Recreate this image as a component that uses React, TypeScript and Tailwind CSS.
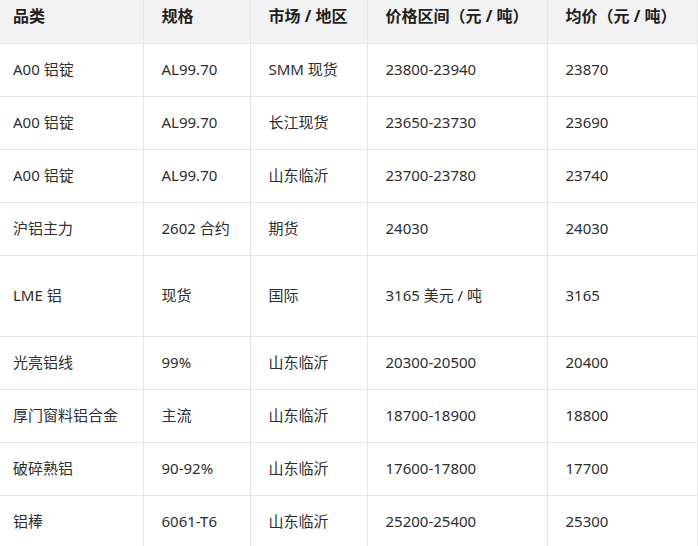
import React from "react";

type Row = { name: string; spec: string; market: string; range: string; avg: string; tall?: boolean };

const rows: Row[] = [
  { name: "A00 铝锭", spec: "AL99.70", market: "SMM 现货", range: "23800-23940", avg: "23870" },
  { name: "A00 铝锭", spec: "AL99.70", market: "长江现货", range: "23650-23730", avg: "23690" },
  { name: "A00 铝锭", spec: "AL99.70", market: "山东临沂", range: "23700-23780", avg: "23740" },
  { name: "沪铝主力", spec: "2602 合约", market: "期货", range: "24030", avg: "24030" },
  { name: "LME 铝", spec: "现货", market: "国际", range: "3165 美元 / 吨", avg: "3165", tall: true },
  { name: "光亮铝线", spec: "99%", market: "山东临沂", range: "20300-20500", avg: "20400" },
  { name: "厚门窗料铝合金", spec: "主流", market: "山东临沂", range: "18700-18900", avg: "18800" },
  { name: "破碎熟铝", spec: "90-92%", market: "山东临沂", range: "17600-17800", avg: "17700" },
  { name: "铝棒", spec: "6061-T6", market: "山东临沂", range: "25200-25400", avg: "25300" },
];

const headers = ["品类", "规格", "市场 / 地区", "价格区间（元 / 吨）", "均价（元 / 吨）"];

export default function App() {
  return (
    <div
      className="w-[698px] h-[546px] overflow-hidden bg-white text-[15px] text-[#2e2e2e]"
      style={{ fontFamily: '"Noto Sans", "Noto Sans CJK SC", sans-serif' }}
    >
      <table className="table-fixed border-collapse w-[697px]">
        <colgroup>
          <col className="w-[143px]" />
          <col className="w-[107px]" />
          <col className="w-[117px]" />
          <col className="w-[180px]" />
          <col className="w-[150px]" />
        </colgroup>
        <thead>
          <tr className="bg-[#f2f2f2] h-[43px]">
            {headers.map((h, i) => (
              <th
                key={h}
                className={`text-left text-[16px] font-bold text-[#1f1f1f] align-top pt-[4px] border-b border-[#e6e6e6] ${
                  i === 0 ? "pl-[13px]" : "pl-[18px] border-l"
                } ${i === 4 ? "border-r" : ""}`}
              >
                {h}
              </th>
            ))}
          </tr>
        </thead>
        <tbody>
          {rows.map((r, ri) => (
            <tr key={ri} className={r.tall ? "h-[81px]" : "h-[53px]"}>
              {[r.name, r.spec, r.market, r.range, r.avg].map((c, i) => (
                <td
                  key={i}
                  className={`whitespace-nowrap align-middle border-b border-[#e6e6e6] ${
                    i === 0 ? "pl-[13px]" : "pl-[18px] border-l"
                  } ${i === 4 ? "border-r" : ""}`}
                >
                  {c}
                </td>
              ))}
            </tr>
          ))}
        </tbody>
      </table>
    </div>
  );
}
